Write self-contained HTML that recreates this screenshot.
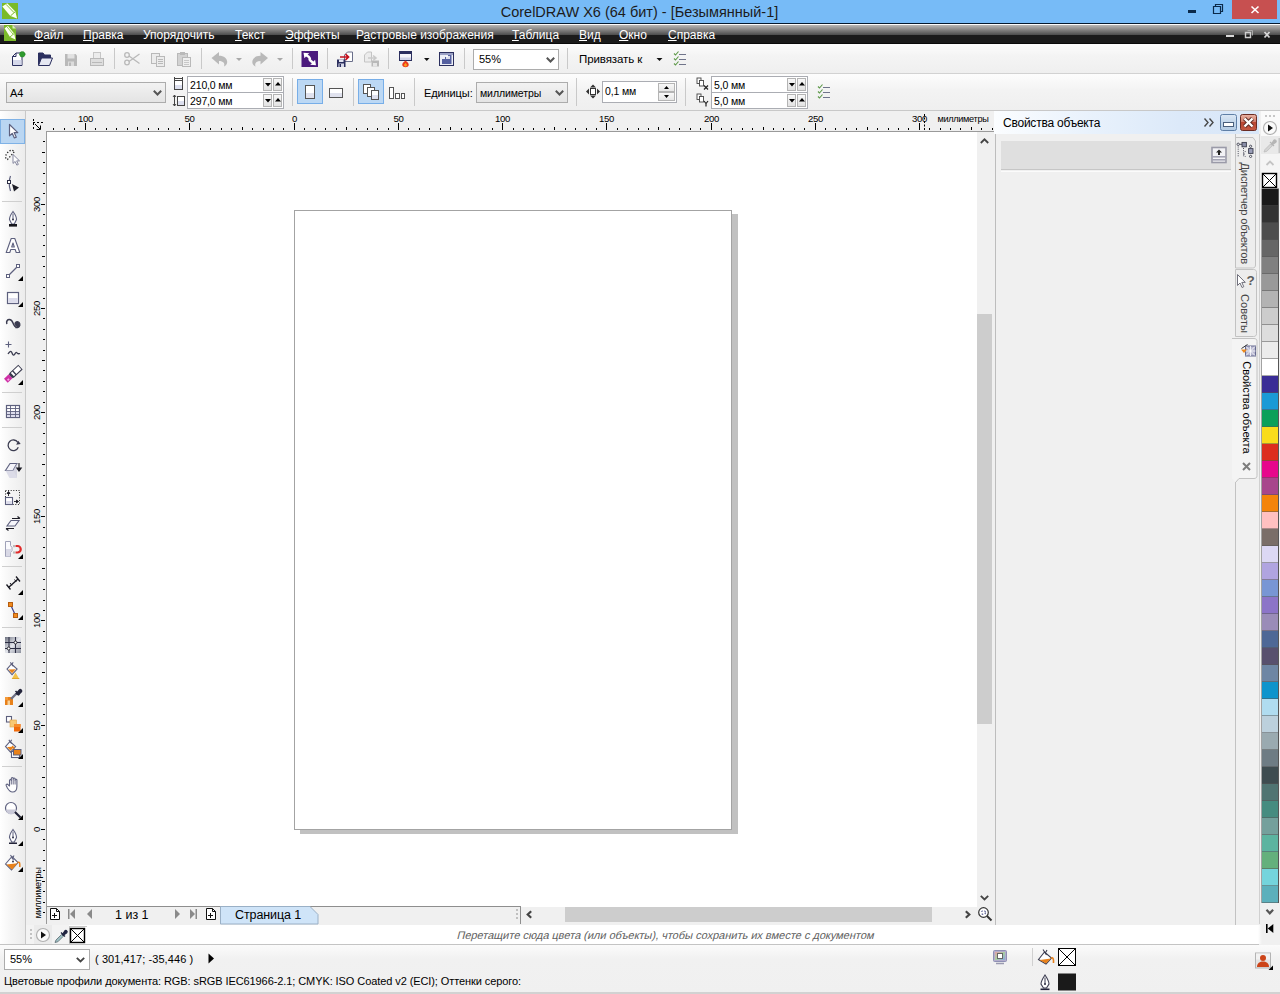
<!DOCTYPE html><html lang="ru"><head><meta charset="utf-8"><title>CorelDRAW X6 (64 бит) - [Безымянный-1]</title><style>
*{box-sizing:border-box;margin:0;padding:0}
html,body{width:1280px;height:994px;overflow:hidden;background:#f0f0f0}
body{position:relative;font-family:"Liberation Sans",sans-serif;font-size:11px;color:#000}
.a{position:absolute}
.t{position:absolute;white-space:nowrap;line-height:1}
svg{position:absolute;overflow:visible}
#title{left:0;top:0;width:1280px;height:23px;background:#77bbf7}
#titleline{left:0;top:22.600px;width:1280px;height:1.400px;background:#03182c}
#menubar{left:0;top:24px;width:1280px;height:20px;background:linear-gradient(#fcfcfc 0px,#fcfcfc 1px,#b6b4b2 1.2px,#4c4c4c 11px,#1b1b1b 11.2px,#1b1b1b 19px,#0a0a0a 19.2px)}
.mi{position:absolute;top:27.500px;color:#fff;font-size:12px;white-space:nowrap;line-height:14px}
.mi u{text-decoration:underline;text-underline-offset:1px}
#tb1{left:0;top:44px;width:1280px;height:29px;background:linear-gradient(#fdfdfd,#f4f4f4 40%,#efefef)}
#tb1line{left:0;top:73px;width:1280px;height:1px;background:#d2d2d2}
#tb2{left:0;top:74px;width:1280px;height:36px;background:linear-gradient(#fdfdfd,#f3f3f3 45%,#efefef)}
#tb2line{left:0;top:110px;width:1280px;height:1px;background:#c8c8c8}
.sep{position:absolute;width:1px;background:#c9c9c9}
.combo{position:absolute;border:1px solid #acacac;background:linear-gradient(#f2f2f2,#e4e4e4)}
.inp{position:absolute;border:1px solid #abadb3;background:#fff}
</style></head><body>
<div class="a" id="title"></div><div class="a" id="titleline"></div>
<svg style="left:2px;top:3px" width="16" height="16" viewBox="0 0 16 16"><rect width="16" height="16" fill="#7abb28"/><path d="M0.300 3.500 L5.200 0.200 L13.300 8.600 L15.100 15.500 L8.400 13 Z" fill="#fdfff2"/><path d="M4 1.300 L12.100 9.700" stroke="#7abb28" stroke-width="0.900"/><path d="M8.400 13 L13.300 8.600" stroke="#7abb28" stroke-width="1"/></svg>
<div class="t" style="left:500px;top:4.500px;font-size:14.500px;width:279px;text-align:center;color:#1c1c1c">CorelDRAW X6 (64 бит) - [Безымянный-1]</div>
<div class="a" style="left:1232px;top:0;width:45px;height:19px;background:#c75050"></div>
<svg style="left:0;top:0" width="1280" height="24"><rect x="1188" y="10" width="8" height="3" fill="#0b2a4a"/><path d="M1213.5 6.5h7v7h-7z M1215.500 6.500v-2h7v7h-2" fill="none" stroke="#0b2a4a" stroke-width="1.2"/><path d="M1251.500 6.500l7 6.500M1258.500 6.500l-7 6.500" stroke="#fff" stroke-width="1.6" fill="none"/></svg>
<div class="a" id="menubar"></div>
<svg style="left:4px;top:25px" width="12" height="16" viewBox="0 0 12 16"><path d="M0 0h8.500l3.500 3.500v12.500h-12z" fill="#7cba2a"/><path d="M8.500 0v3.500h3.500z" fill="#d9efb5"/><path d="M0.600 3.200 L4 1 L10.200 8.400 L11.400 14.400 L6 12 Z" fill="#fdfff2"/><path d="M3 1.900 L9.200 9.300" stroke="#7abb28" stroke-width="0.800"/><path d="M6 12 L10.200 8.400" stroke="#7abb28" stroke-width="0.900"/></svg>
<div class="mi" style="left:34px"><u>Ф</u>айл</div>
<div class="mi" style="left:83px"><u>П</u>равка</div>
<div class="mi" style="left:143px">Упоря<u>д</u>очить</div>
<div class="mi" style="left:235px"><u>Т</u>екст</div>
<div class="mi" style="left:285px"><u>Э</u>ффекты</div>
<div class="mi" style="left:356px">Р<u>а</u>стровые изображения</div>
<div class="mi" style="left:512px"><u>Т</u>аблица</div>
<div class="mi" style="left:579px"><u>В</u>ид</div>
<div class="mi" style="left:619px"><u>О</u>кно</div>
<div class="mi" style="left:668px"><u>С</u>правка</div>
<svg style="left:0;top:24px" width="1280" height="20"><rect x="1226" y="11" width="8" height="2" fill="#d8d8d8"/><path d="M1245.500 8.500h5v5h-5z" fill="none" stroke="#d0d0d0" stroke-width="1.4"/><path d="M1247.500 6.500h5v5" fill="none" stroke="#aaa" stroke-width="1"/><path d="M1264.500 8l5 5.500M1269.500 8l-5 5.500" stroke="#d8d8d8" stroke-width="1.8" fill="none"/></svg>
<div class="a" id="tb1"></div><div class="a" id="tb1line"></div><div class="a" id="tb2"></div><div class="a" id="tb2line"></div>
<svg style="left:0;top:44px" width="1280" height="67"><path d="M12.500 21.500v-9l3.500-3.500h6v12.500z" fill="#fff" stroke="#2b2f5e" stroke-width="1"/><path d="M13 16h8.500v5h-8.500z" fill="#d5d8ea"/><path d="M12.500 12.500h3.500v-3.500" fill="none" stroke="#2b2f5e" stroke-width="1"/><circle cx="22.300" cy="10.300" r="2.800" fill="#2e9a2e" stroke="#1f7a1f" stroke-width=".8" stroke-dasharray="1 1"/><path d="M38.500 21v-12h4.500l1.500 2h6v3" fill="#2b2f5e" stroke="#2b2f5e" stroke-width="1"/><path d="M38.500 21.500l3-7.500h11l-3 7.500z" fill="#e6e8f2" stroke="#2b2f5e" stroke-width="1"/><path d="M65 10h10.500l1.500 1.500v10.500h-12z" fill="#b9b9b9"/><rect x="67.500" y="10" width="7" height="4.500" fill="#e2e2e2"/><rect x="68" y="17.500" width="6" height="4.500" fill="#dcdcdc"/><rect x="69" y="18.500" width="2" height="3.500" fill="#b9b9b9"/><rect x="93.500" y="8.500" width="7" height="7" fill="#ececec" stroke="#c6c6c6"/><rect x="90.500" y="14.500" width="13" height="7" fill="#dedede" stroke="#b9b9b9"/><rect x="92" y="18" width="10" height="1" fill="#b9b9b9"/><g fill="none" stroke="#b9b9b9" stroke-width="1.300"><circle cx="127" cy="11" r="2.300"/><circle cx="127" cy="18.500" r="2.300"/><path d="M129 12l10.500 7.500M129 17.500l10.500-7.500"/></g><g fill="#ececec" stroke="#b9b9b9"><rect x="151.500" y="9.500" width="8" height="10"/><rect x="156.500" y="12.500" width="8" height="10"/></g><path d="M158 15.500h5M158 17.500h5M158 19.500h5" stroke="#b9b9b9"/><rect x="177.500" y="9.500" width="10" height="12" fill="#d2d2d2" stroke="#b9b9b9"/><rect x="180" y="8" width="5" height="3" fill="#b9b9b9"/><rect x="182.500" y="13.500" width="8" height="9" fill="#efefef" stroke="#b9b9b9"/><path d="M184 16.500h5M184 18.500h5M184 20.500h5" stroke="#c8c8c8"/><path d="M211.500 14l7.500-6v3.800c5 0 8.200 2.700 8.200 6.200c0 2.400-1.400 3.800-3.200 4.400c1.200-3-.8-5.400-5-5.400v3.500z" fill="#b9b9b9"/><path d="M236 14h6l-3 3z" fill="#a9a9a9"/><path d="M268 14l-7.500-6v3.800c-5 0-8.200 2.700-8.200 6.200c0 2.400 1.400 3.800 3.200 4.400c-1.200-3 .8-5.400 5-5.400v3.500z" fill="#b9b9b9"/><path d="M277 14h6l-3 3z" fill="#a9a9a9"/><rect x="301.500" y="7" width="16.500" height="16" fill="#4b1a7d"/><g fill="#fff"><path d="M303.500 8.800l5.800.4-1.700 1.600c2.200 1 3.700 2.600 3.600 4.600l-1.700.5c-.4-1.200-1.800-2.400-3.500-3.300l-1.600 1.600z"/><path transform="rotate(180 309.750 15)" d="M303.500 8.800l5.800.4-1.700 1.600c2.200 1 3.700 2.600 3.600 4.600l-1.700.5c-.4-1.200-1.800-2.400-3.500-3.300l-1.600 1.600z"/></g><path d="M344.500 17.500v-6.500l3-3h5v9.500z" fill="#fff" stroke="#6a6f8a"/><rect x="337" y="15.500" width="8.500" height="7.500" fill="#2b2f5e"/><rect x="339" y="15.500" width="4.500" height="2.500" fill="#e4e6f2"/><rect x="338.500" y="19.500" width="5.500" height="3.500" fill="#d6d8e8"/><rect x="339.500" y="20" width="1.500" height="3" fill="#2b2f5e"/><path d="M340 13h7.500M345.500 10.200l3 2.800-3 2.800" fill="none" stroke="#c4101e" stroke-width="1.700"/><path d="M364.500 18v-7l3-3h4v10z" fill="#ececec" stroke="#c4c4c4"/><rect x="371.500" y="16.500" width="7.500" height="6" fill="#b9b9b9"/><rect x="373" y="19" width="4" height="3.500" fill="#e6e6e6"/><path d="M368 14h7M373 11.500l3 2.500-3 2.500" fill="none" stroke="#c9c9c9" stroke-width="1.600"/><rect x="399.500" y="7.500" width="12" height="9" fill="#f4f4f8" stroke="#2b2f5e"/><rect x="399" y="7" width="13" height="3" fill="#2b2f5e"/><rect x="400" y="13.500" width="11" height="2.500" fill="#cfd2e6"/><path d="M405.500 16.500c2 1.800 3.600 2.800 3.200 4.800c-.3 1.300-1.600 1.900-3.200 1.900s-2.900-.6-3.200-1.900c-.4-2 1.200-3 3.200-4.800z" fill="#ea3a1c"/><path d="M405.500 19c1 1 1.600 1.500 1.400 2.600c-.2.700-.8 1-1.400 1s-1.200-.3-1.400-1c-.2-1.100.4-1.600 1.400-2.600z" fill="#f9a01c"/><path d="M424 14h5.500l-2.750 3z" fill="#111"/><rect x="439.500" y="8.500" width="14" height="13" fill="#eceef6" stroke="#2b2f5e"/><rect x="440" y="9" width="13" height="2" fill="#9aa0c4"/><path d="M442 20v-5h3v-2h3v-2h3.500v9z" fill="#5560a0"/><rect x="446" y="12" width="4" height="3" fill="#fff" opacity=".8"/><path d="M674 9.5l1.500 1.500 3-3.500" fill="none" stroke="#5f9a4a" stroke-width="1.150"/><path d="M679 10.5h7" stroke="#70748a" stroke-width="1"/><path d="M674 14.5l1.500 1.500 3-3.500" fill="none" stroke="#5f9a4a" stroke-width="1.150"/><path d="M679 15.5h7" stroke="#70748a" stroke-width="1"/><path d="M674 19.5l1.500 1.500 3-3.500" fill="none" stroke="#5f9a4a" stroke-width="1.150"/><path d="M679 20.5h7" stroke="#70748a" stroke-width="1"/><path d="M656.500 14h6l-3 3z" fill="#111"/><g fill="none" stroke="#444"><rect x="174.500" y="36.500" width="8" height="9" fill="#fff"/><path d="M174 34.500h9M174.500 33v3M182.500 33v3"/><rect x="175" y="41" width="7" height="4" fill="#dcdfee" stroke="none"/><rect x="177.500" y="52.500" width="7" height="9" fill="#fff"/><rect x="178" y="57" width="6" height="4" fill="#dcdfee" stroke="none"/><path d="M174.500 51v11M173 53l1.500-2 1.500 2M173 60l1.500 2 1.500-2"/></g><rect x="297.500" y="35.500" width="25" height="24" fill="#bcd8f4" stroke="#77aee8"/><rect x="305.500" y="41.500" width="9" height="13" fill="#fff" stroke="#555"/><rect x="306" y="49" width="8" height="5" fill="#e0e2ee"/><rect x="329.500" y="44.500" width="13" height="9" fill="#fff" stroke="#555"/><rect x="330" y="49" width="12" height="4" fill="#e0e2ee"/><rect x="358.500" y="35.500" width="25" height="24" fill="#bcd8f4" stroke="#77aee8"/><g fill="#fff" stroke="#555"><rect x="363.500" y="40.500" width="7" height="9"/><rect x="367.500" y="43.500" width="7" height="9"/><rect x="371.500" y="46.500" width="7" height="9"/></g><rect x="372" y="51" width="6" height="4" fill="#dfe1ee"/><g fill="#fff" stroke="#555"><rect x="389.500" y="43.500" width="4" height="11"/><rect x="395.500" y="49.500" width="4" height="5"/><rect x="401.500" y="49.500" width="3" height="5"/></g><g fill="#333"><rect x="590.500" y="44.500" width="5" height="6" fill="#fff" stroke="#333"/><path d="M593 40.500l3 3h-6zM593 54.500l3-3h-6zM586 47.500l3-3v6zM600 47.500l-3-3v6z"/></g><g fill="#fff" stroke="#444" stroke-width=".9"><rect x="697" y="34" width="4" height="5.500"/><rect x="699.500" y="36.5" width="4" height="5.500"/></g><g fill="#fff" stroke="#444" stroke-width=".9"><rect x="697" y="50" width="4" height="5.500"/><rect x="699.500" y="52.5" width="4" height="5.500"/></g><path d="M704 41.500l4 4M708 41.500l-4 4" stroke="#222" stroke-width="1.200"/><path d="M704 57l2 2.500 2-2.500M706 59.500v3" stroke="#222" stroke-width="1.200" fill="none"/><path d="M818 42.5l1.500 1.500 3-3.500" fill="none" stroke="#5f9a4a" stroke-width="1.150"/><path d="M823 43.5h7" stroke="#70748a" stroke-width="1"/><path d="M818 47.5l1.500 1.500 3-3.500" fill="none" stroke="#5f9a4a" stroke-width="1.150"/><path d="M823 48.5h7" stroke="#70748a" stroke-width="1"/><path d="M818 52.5l1.500 1.500 3-3.500" fill="none" stroke="#5f9a4a" stroke-width="1.150"/><path d="M823 53.5h7" stroke="#70748a" stroke-width="1"/></svg>
<div class="sep" style="left:114px;top:48px;height:21px"></div>
<div class="sep" style="left:201px;top:48px;height:21px"></div>
<div class="sep" style="left:292px;top:48px;height:21px"></div>
<div class="sep" style="left:327px;top:48px;height:21px"></div>
<div class="sep" style="left:388px;top:48px;height:21px"></div>
<div class="sep" style="left:464px;top:48px;height:21px"></div>
<div class="sep" style="left:567px;top:48px;height:21px"></div>
<div class="sep" style="left:292px;top:78px;height:28px"></div>
<div class="sep" style="left:353px;top:78px;height:28px"></div>
<div class="sep" style="left:414px;top:78px;height:28px"></div>
<div class="sep" style="left:576px;top:78px;height:28px"></div>
<div class="sep" style="left:685px;top:78px;height:28px"></div>
<div class="inp" style="left:473px;top:49px;width:86px;height:21px;border-color:#acacac"></div>
<div class="t" style="left:479px;top:54px;font-size:11px">55%</div><svg style="left:546px;top:57px" width="9" height="6"><path d="M0.800 0.800l3.700 3.700 3.700-3.700" fill="none" stroke="#555" stroke-width="2"/></svg>
<div class="t" style="left:579px;top:54px;font-size:11.500px;letter-spacing:-0.100px">Привязать к</div>
<div class="combo" style="left:6px;top:82px;width:160px;height:21px"></div><div class="t" style="left:10px;top:88px;font-size:11px">A4</div><svg style="left:153px;top:90px" width="9" height="6"><path d="M0.800 0.800l3.700 3.700 3.700-3.700" fill="none" stroke="#555" stroke-width="2"/></svg>
<div class="inp" style="left:187px;top:76px;width:97px;height:17px"></div><div class="inp" style="left:187px;top:92px;width:97px;height:17px"></div>
<div class="t" style="left:190px;top:80px;font-size:10.500px;letter-spacing:-0.150px">210,0 мм</div><div class="t" style="left:190px;top:96px;font-size:10.500px;letter-spacing:-0.150px">297,0 мм</div>
<div class="a" style="left:263px;top:78px;width:9px;height:13px;border:1px solid #b4b4b4;background:linear-gradient(#f8f8f8,#e2e2e2)"></div><svg style="left:264.5px;top:83px" width="6" height="4"><path d="M0 0h6l-3 3.500z" fill="#000"/></svg><div class="a" style="left:273px;top:78px;width:9px;height:13px;border:1px solid #b4b4b4;background:linear-gradient(#f8f8f8,#e2e2e2)"></div><svg style="left:274.5px;top:82px" width="6" height="4"><path d="M0 3.500h6l-3-3.500z" fill="#000"/></svg><div class="a" style="left:263px;top:94px;width:9px;height:13px;border:1px solid #b4b4b4;background:linear-gradient(#f8f8f8,#e2e2e2)"></div><svg style="left:264.5px;top:99px" width="6" height="4"><path d="M0 0h6l-3 3.500z" fill="#000"/></svg><div class="a" style="left:273px;top:94px;width:9px;height:13px;border:1px solid #b4b4b4;background:linear-gradient(#f8f8f8,#e2e2e2)"></div><svg style="left:274.5px;top:98px" width="6" height="4"><path d="M0 3.500h6l-3-3.500z" fill="#000"/></svg>
<div class="t" style="left:424px;top:87.500px;font-size:11px;letter-spacing:-0.100px">Единицы:</div>
<div class="combo" style="left:476px;top:82px;width:92px;height:21px"></div><div class="t" style="left:480px;top:87.500px;font-size:10.500px;letter-spacing:-0.100px">миллиметры</div><svg style="left:555px;top:90px" width="9" height="6"><path d="M0.800 0.800l3.700 3.700 3.700-3.700" fill="none" stroke="#555" stroke-width="2"/></svg>
<div class="inp" style="left:602px;top:81px;width:75px;height:22px"></div><div class="t" style="left:605px;top:86px;font-size:10.500px;letter-spacing:-0.150px">0,1 мм</div>
<div class="a" style="left:658px;top:83px;width:17px;height:9px;border:1px solid #b4b4b4;background:linear-gradient(#f8f8f8,#e6e6e6)"></div><div class="a" style="left:658px;top:92px;width:17px;height:9px;border:1px solid #b4b4b4;background:linear-gradient(#f8f8f8,#e6e6e6)"></div>
<svg style="left:664px;top:86px" width="6" height="12"><path d="M0 3h5l-2.500-3zM0 9h5l-2.500 3z" fill="#000"/></svg>
<div class="inp" style="left:711px;top:76px;width:97px;height:17px"></div><div class="inp" style="left:711px;top:92px;width:97px;height:17px"></div>
<div class="t" style="left:714px;top:80px;font-size:10.500px;letter-spacing:-0.150px">5,0 мм</div><div class="t" style="left:714px;top:96px;font-size:10.500px;letter-spacing:-0.150px">5,0 мм</div>
<div class="a" style="left:787px;top:78px;width:9px;height:13px;border:1px solid #b4b4b4;background:linear-gradient(#f8f8f8,#e2e2e2)"></div><svg style="left:788.5px;top:83px" width="6" height="4"><path d="M0 0h6l-3 3.500z" fill="#000"/></svg><div class="a" style="left:797px;top:78px;width:9px;height:13px;border:1px solid #b4b4b4;background:linear-gradient(#f8f8f8,#e2e2e2)"></div><svg style="left:798.5px;top:82px" width="6" height="4"><path d="M0 3.500h6l-3-3.500z" fill="#000"/></svg><div class="a" style="left:787px;top:94px;width:9px;height:13px;border:1px solid #b4b4b4;background:linear-gradient(#f8f8f8,#e2e2e2)"></div><svg style="left:788.5px;top:99px" width="6" height="4"><path d="M0 0h6l-3 3.500z" fill="#000"/></svg><div class="a" style="left:797px;top:94px;width:9px;height:13px;border:1px solid #b4b4b4;background:linear-gradient(#f8f8f8,#e2e2e2)"></div><svg style="left:798.5px;top:98px" width="6" height="4"><path d="M0 3.500h6l-3-3.500z" fill="#000"/></svg>
<div class="a" style="left:0;top:111px;width:25px;height:834px;background:linear-gradient(90deg,#ffffff,#f6f6f6 40%,#ececec)"></div>
<div class="a" style="left:0;top:119px;width:25px;height:25px;background:#bad6f2;border:1px solid #7fb2e6"></div>
<svg style="left:0;top:0" width="27" height="900"><path transform="translate(9.5,124.5) scale(1.08)" d="M0 0v10.500l2.500-2.300 2 4.300 1.800-.8-2-4.200h3.400z" fill="#fff" stroke="#5d607e" stroke-width="1.100" stroke-linejoin="round"/><path d="M6 158.500c-1.500-3 2-8 6-8.500l2.500 1.500l-7 8z" fill="none" stroke="#222" stroke-width="1.300" stroke-dasharray="1.300 1.700"/><path transform="translate(13,154.5) scale(0.85)" d="M0 0v10.500l2.500-2.300 2 4.300 1.800-.8-2-4.200h3.400z" fill="#fff" stroke="#7d8098" stroke-width="1.100" stroke-linejoin="round"/><path d="M10.500 176c-2 5-1.500 10 0 15" fill="none" stroke="#5d607e" stroke-width="1.200"/><rect x="7.500" y="180.500" width="3" height="3" fill="#fff" stroke="#2c2e44"/><path d="M12 184l7 3.500-5 4z" fill="#1b1b24"/><rect x="2" y="201" width="20" height="1" fill="#cfcfcf"/><path d="M13 211.5c-1.500 2-3.500 5.500-3.500 8l2.200 4.500h2.600l2.200-4.500c0-2.500-2-6-3.500-8z" fill="#fff" stroke="#5d607e" stroke-width="1.100"/><path d="M13 213.5v6.500" stroke="#5d607e"/><circle cx="13" cy="219.5" r=".9" fill="#2c2e44"/><rect x="9" y="224" width="8" height="2.600" fill="#15151c"/><path d="M11.200 238.500h3.600l5 14h-3.600l-1-3h-4.400l-1 3h-3.600z M13 243l-1.300 4h2.600z" fill="#fff" stroke="#5d607e" stroke-width="1.100" fill-rule="evenodd" stroke-linejoin="round"/><path d="M9.500 274.500l7-7" stroke="#5d607e" stroke-width="1.200"/><rect x="6.500" y="274.500" width="3" height="3" fill="#fff" stroke="#5d607e"/><rect x="16.500" y="264.500" width="3" height="3" fill="#fff" stroke="#5d607e"/><path d="M23 276v5h-5z" fill="#000"/><rect x="7.500" y="292.500" width="11" height="11" fill="#fff" stroke="#5d607e" stroke-width="1.200"/><rect x="8.200" y="298" width="9.600" height="4.800" fill="#dcdceb"/><path d="M23 302v5h-5z" fill="#000"/><path d="M6.800 323.400c-.7-2.100 .6-3.800 2.500-3.800c2 0 3 1.500 3.700 3.400c.9 2.500 1.900 4.400 4.300 4.400" fill="none" stroke="#3b3c50" stroke-width="1.500" stroke-linecap="round"/><path d="M15.500 327.600c3.200.700 5-1.600 4.300-3.900c-.6-1.900-2.700-2.600-4.100-1.500c-1 .8-1 2.300 0 3c.6.400 1.500.300 1.800-.300" fill="#3b3c50" stroke="#3b3c50" stroke-width="1.200" stroke-linejoin="round"/><path d="M8.500 341.500v6M5.500 344.500h6" stroke="#5d607e" stroke-width="1.100"/><path d="M8 354c1.500-2.500 3-3.500 3.800-1.500s1.200 3 2.200 2.500s1.500-3 2.500-2.500s1 2 3.500 1" fill="none" stroke="#3b3c50" stroke-width="1.300"/><g transform="translate(12.800,374.200) rotate(-43)"><rect x="-9.500" y="-2.700" width="6.500" height="5.400" fill="#cf2fa6"/><rect x="-8" y="0" width="2" height="1.800" fill="#f3a8e2"/><rect x="-1.500" y="-2.700" width="11.500" height="5.400" fill="#fff" stroke="#3b3c50" stroke-width="1"/><rect x="-3" y="-2.700" width="2.400" height="5.400" fill="#3b3c50"/><rect x="1.500" y="-2.700" width="1.300" height="5.400" fill="#3b3c50"/></g><path d="M23 380v5h-5z" fill="#000"/><rect x="2" y="392" width="20" height="1" fill="#cfcfcf"/><rect x="6.500" y="405.500" width="13" height="12" fill="#fff" stroke="#5d607e" stroke-width="1.200"/><rect x="7" y="411" width="12" height="6" fill="#dcdcec"/><path d="M6.500 408.500h13M6.500 411.500h13M6.500 414.500h13M10.500 405.500v12M15.500 405.500v12" stroke="#5d607e" stroke-width=".9"/><rect x="2" y="427" width="20" height="1" fill="#cfcfcf"/><path d="M17.800 442.300a5.300 5.300 0 1 0 .5 5" fill="none" stroke="#3b3c50" stroke-width="1.300"/><path d="M16.200 444.800l4.500-.8-2.500-3.200z" fill="#3b3c50"/><path d="M10 463.500h7l-4 7h-7.500z" fill="#f4f4fa" stroke="#5d607e" stroke-width="1.100"/><path d="M5.500 470.500h7.500l4 7.500h-7.500z" fill="#dcdce8"/><path d="M13 470.500l4-7v14.500z" fill="#c9c9da" opacity=".7"/><path d="M19 463v7.500M16.800 468l2.200 3 2.200-3z" stroke="#1b1b24" stroke-width="1.100" fill="#1b1b24"/><rect x="5.500" y="490.500" width="14" height="14" fill="none" stroke="#222" stroke-dasharray="1 1.600"/><rect x="5.500" y="497.500" width="7" height="7" fill="#fff" stroke="#5d607e" stroke-width="1.100"/><rect x="6.200" y="501" width="5.600" height="3" fill="#dcdceb"/><path d="M8.500 496v-4M7 493.500l1.500-2 1.500 2zM14 501.500h4M16.500 500l2 1.500-2 1.500z" stroke="#1b1b24" stroke-width=".9" fill="#1b1b24"/><path d="M11 520.500h8l-4 5.500h-8z" fill="#f6f6fb" stroke="#5d607e" stroke-width="1.100"/><path d="M12 518.500h7.500M17.500 516.500l2.500 2" stroke="#1b1b24" stroke-width="1.200" fill="none"/><path d="M6.500 528.500h7.500M8.500 530.500l-2.500-2" stroke="#1b1b24" stroke-width="1.200" fill="none"/><path d="M5.500 541.500h5v4l1.500 2v3l-1.500 2v4h-5z" fill="#fafafd" stroke="#a0a2b8" stroke-width="1"/><path d="M6 549h5.500v1.500l-1.200 2v4h-4.300z" fill="#d9d9e6"/><path d="M15.500 546h2a3 3 0 0 1 0 6.500h-2" fill="none" stroke="#e02a2a" stroke-width="2.200"/><rect x="13" y="545" width="2.200" height="2.200" fill="#bbb"/><rect x="13" y="551.400" width="2.200" height="2.200" fill="#bbb"/><path d="M23 554v5h-5z" fill="#000"/><rect x="2" y="566" width="20" height="1" fill="#cfcfcf"/><path d="M8.500 587.500l9.500-8.500" stroke="#1b1b24" stroke-width="1.400"/><path d="M6.500 584.500l4 5M16 576.500l4 5" stroke="#1b1b24" stroke-width="1.300"/><path d="M10 583l1.800 2.300M14.500 579.500l1.800 2.300" stroke="#1b1b24" stroke-width="1"/><path d="M23 590v5h-5z" fill="#000"/><path d="M10.500 604.500l5 11" stroke="#3a3f8a" stroke-width="1.200"/><rect x="8.500" y="602.500" width="4" height="4" fill="#f08a1e" stroke="#b55d10"/><rect x="13.500" y="613.500" width="4" height="4" fill="#f08a1e" stroke="#b55d10"/><path d="M23 615v5h-5z" fill="#000"/><rect x="2" y="627" width="20" height="1" fill="#cfcfcf"/><defs><linearGradient id="mg" x1="0" y1="0" x2="1" y2="1"><stop offset="0" stop-color="#6e7280"/><stop offset=".5" stop-color="#e4e6ec"/><stop offset="1" stop-color="#8d919e"/></linearGradient></defs><rect x="5" y="637" width="16" height="16" fill="url(#mg)"/><path d="M9 637v16M15.500 637v16M5 642.500h16M5 648.500h16" stroke="#2c2e44" stroke-width="1.100"/><circle cx="15.500" cy="642.500" r="1.500" fill="#fff" stroke="#1b1b24" stroke-width=".9"/><circle cx="8.700" cy="648.500" r="1.500" fill="#fff" stroke="#1b1b24" stroke-width=".9"/><g transform="translate(7,664) scale(1.12)"><path d="M0 4.500l4-4.500 5 4.500-4.500 5z" fill="#fff" stroke="#5d607e" stroke-width="1"/><path d="M1.300 5l6.500-.3-3.300 3.600z" fill="#e8811a"/><path d="M3 -1.500l2.500 3.500M5.500 -1.500l-1.500 2.500" stroke="#5d607e" stroke-width="1"/></g><path d="M15.500 672.500l3.800 6.500h-7.600z" fill="#f2c14a"/><path d="M12.500 678h6.500l.5 1h-7.600z" fill="#e0a52a"/><rect x="5" y="697" width="8" height="8" fill="#e8811a"/><rect x="7.500" y="700.500" width="2.500" height="4.500" fill="#f8d29a"/><rect x="5" y="697" width="3" height="3" fill="#f39a3a"/><path d="M11 699l5.500-5.500" stroke="#6e7084" stroke-width="2.400"/><path d="M15.500 691l4 4M16.500 693.500l3-3.500c1-1 2.800.6 1.800 1.800l-3 3z" fill="#23243a" stroke="#23243a" stroke-width="1.600"/><path d="M23 702v5h-5z" fill="#000"/><rect x="6.500" y="716.500" width="5" height="5.500" fill="#fff" stroke="#5d607e" stroke-width="1.100"/><rect x="10" y="720" width="6.500" height="7" fill="#f7c873" stroke="#e0a040" stroke-width=".6"/><rect x="14" y="724" width="6.500" height="7.500" fill="#f06a0a"/><rect x="14" y="724" width="6.500" height="3" fill="#f58a2a"/><path d="M23 728v5h-5z" fill="#000"/><g transform="translate(5.5,741.5) scale(1.12)"><path d="M0 4.500l4-4.500 5 4.500-4.500 5z" fill="#fff" stroke="#5d607e" stroke-width="1"/><path d="M1.300 5l6.500-.3-3.300 3.600z" fill="#e8811a"/><path d="M3 -1.500l2.500 3.500M5.500 -1.500l-1.500 2.500" stroke="#5d607e" stroke-width="1"/></g><path d="M12 746l2 2v3" fill="none" stroke="#e8811a" stroke-width="1.200"/><rect x="11.500" y="751.500" width="8" height="6" fill="#fff" stroke="#5d607e" stroke-width="1.100"/><rect x="13.500" y="749.500" width="7.500" height="5.500" fill="#e8811a" stroke="#5d607e" stroke-width="1"/><path d="M23 754v5h-5z" fill="#000"/><rect x="2" y="766" width="20" height="1" fill="#cfcfcf"/><path d="M9.500 786v-5.500c0-1.300 1.800-1.300 1.800 0v-2c0-1.300 1.900-1.300 1.900 0v.4c0-1.300 1.900-1.300 1.900 0v1.200c0-1.200 1.800-1.200 1.800 0v6.400c0 3.500-1.500 5.500-4.500 5.500c-2.500 0-3.500-1.500-5-4l-1.200-2.500c-.5-1.200 1-2 1.800-.8z" fill="#fff" stroke="#5d607e" stroke-width="1.100" stroke-linejoin="round"/><path d="M11.300 780.500v4M13.200 779v5.500M15.100 780v4.500" stroke="#5d607e" stroke-width=".9"/><circle cx="11" cy="808" r="5.500" fill="#fff" stroke="#5d607e" stroke-width="1.200"/><path d="M6 809.500h10a5 5 0 0 1 -10 0z" fill="#c9c9d8"/><path d="M15 812l5.500 5.500" stroke="#23243a" stroke-width="2.200"/><path d="M23 815v5h-5z" fill="#000"/><path d="M13 829.5c-1.500 2-3.500 5.500-3.500 8l2.200 4.500h2.600l2.200-4.500c0-2.500-2-6-3.500-8z" fill="#fff" stroke="#5d607e" stroke-width="1.100"/><path d="M13 831.5v6.500" stroke="#5d607e"/><circle cx="13" cy="837.5" r=".9" fill="#2c2e44"/><rect x="9" y="842.500" width="8" height="1.500" fill="#23243a"/><path d="M23 841v5h-5z" fill="#000"/><path d="M5.500 864l6.500-7.500 6 6-6.500 7.500z" fill="#fff" stroke="#5d607e" stroke-width="1.100"/><path d="M6.500 864.500l11-1.300-5.500 6.300z" fill="#e8811a"/><path d="M10.500 855l3 5M14 855.500l-2 3.500" stroke="#5d607e" stroke-width="1.100"/><circle cx="13" cy="861.500" r=".9" fill="#23243a"/><path d="M17.500 862.500c2-1 2.500 0 2.300 4.500" fill="none" stroke="#e8811a" stroke-width="1.500"/><path d="M23 867v5h-5z" fill="#000"/></svg>
<div class="a" style="left:26px;top:111px;width:970px;height:813px;background:#f0f0f0"></div>
<div class="a" style="left:25px;top:111px;width:1px;height:834px;background:#c8c8c8"></div>
<div class="a" style="left:46px;top:131px;width:931px;height:776px;background:#fff;border-left:1px solid #9a9a9a"></div>
<div class="a" style="left:46px;top:131px;width:948px;height:1px;background:#9a9a9a"></div>
<div class="a" style="left:300px;top:214px;width:438px;height:620px;background:#c1c1c1"></div>
<div class="a" style="left:294px;top:210px;width:438px;height:620px;background:#fff;border:1px solid #a3a3a3"></div>
<svg style="left:0;top:0" width="1000" height="930" font-family="Liberation Sans, sans-serif" font-size="9.600" letter-spacing="-0.350" fill="#000"><rect x="53" y="128" width="1" height="2"/><rect x="64" y="128" width="1" height="2"/><rect x="74" y="128" width="1" height="2"/><rect x="85" y="123" width="1" height="7"/><text x="85.5" y="121.700" text-anchor="middle">100</text><rect x="95" y="128" width="1" height="2"/><rect x="106" y="128" width="1" height="2"/><rect x="116" y="128" width="1" height="2"/><rect x="127" y="128" width="1" height="2"/><rect x="137" y="127" width="1" height="3"/><rect x="148" y="128" width="1" height="2"/><rect x="158" y="128" width="1" height="2"/><rect x="168" y="128" width="1" height="2"/><rect x="179" y="128" width="1" height="2"/><rect x="189" y="123" width="1" height="7"/><text x="189.5" y="121.700" text-anchor="middle">50</text><rect x="200" y="128" width="1" height="2"/><rect x="210" y="128" width="1" height="2"/><rect x="221" y="128" width="1" height="2"/><rect x="231" y="128" width="1" height="2"/><rect x="242" y="127" width="1" height="3"/><rect x="252" y="128" width="1" height="2"/><rect x="263" y="128" width="1" height="2"/><rect x="273" y="128" width="1" height="2"/><rect x="283" y="128" width="1" height="2"/><rect x="294" y="123" width="1" height="7"/><text x="294.5" y="121.700" text-anchor="middle">0</text><rect x="304" y="128" width="1" height="2"/><rect x="315" y="128" width="1" height="2"/><rect x="325" y="128" width="1" height="2"/><rect x="336" y="128" width="1" height="2"/><rect x="346" y="127" width="1" height="3"/><rect x="356" y="128" width="1" height="2"/><rect x="367" y="128" width="1" height="2"/><rect x="377" y="128" width="1" height="2"/><rect x="388" y="128" width="1" height="2"/><rect x="398" y="123" width="1" height="7"/><text x="398.5" y="121.700" text-anchor="middle">50</text><rect x="408" y="128" width="1" height="2"/><rect x="419" y="128" width="1" height="2"/><rect x="429" y="128" width="1" height="2"/><rect x="440" y="128" width="1" height="2"/><rect x="450" y="127" width="1" height="3"/><rect x="461" y="128" width="1" height="2"/><rect x="471" y="128" width="1" height="2"/><rect x="481" y="128" width="1" height="2"/><rect x="492" y="128" width="1" height="2"/><rect x="502" y="123" width="1" height="7"/><text x="502.5" y="121.700" text-anchor="middle">100</text><rect x="513" y="128" width="1" height="2"/><rect x="523" y="128" width="1" height="2"/><rect x="533" y="128" width="1" height="2"/><rect x="544" y="128" width="1" height="2"/><rect x="554" y="127" width="1" height="3"/><rect x="565" y="128" width="1" height="2"/><rect x="575" y="128" width="1" height="2"/><rect x="586" y="128" width="1" height="2"/><rect x="596" y="128" width="1" height="2"/><rect x="606" y="123" width="1" height="7"/><text x="606.5" y="121.700" text-anchor="middle">150</text><rect x="617" y="128" width="1" height="2"/><rect x="627" y="128" width="1" height="2"/><rect x="638" y="128" width="1" height="2"/><rect x="648" y="128" width="1" height="2"/><rect x="658" y="127" width="1" height="3"/><rect x="669" y="128" width="1" height="2"/><rect x="679" y="128" width="1" height="2"/><rect x="690" y="128" width="1" height="2"/><rect x="700" y="128" width="1" height="2"/><rect x="711" y="123" width="1" height="7"/><text x="711.5" y="121.700" text-anchor="middle">200</text><rect x="721" y="128" width="1" height="2"/><rect x="731" y="128" width="1" height="2"/><rect x="742" y="128" width="1" height="2"/><rect x="752" y="128" width="1" height="2"/><rect x="763" y="127" width="1" height="3"/><rect x="773" y="128" width="1" height="2"/><rect x="783" y="128" width="1" height="2"/><rect x="794" y="128" width="1" height="2"/><rect x="804" y="128" width="1" height="2"/><rect x="815" y="123" width="1" height="7"/><text x="815.5" y="121.700" text-anchor="middle">250</text><rect x="825" y="128" width="1" height="2"/><rect x="835" y="128" width="1" height="2"/><rect x="846" y="128" width="1" height="2"/><rect x="856" y="128" width="1" height="2"/><rect x="867" y="127" width="1" height="3"/><rect x="877" y="128" width="1" height="2"/><rect x="888" y="128" width="1" height="2"/><rect x="898" y="128" width="1" height="2"/><rect x="908" y="128" width="1" height="2"/><rect x="919" y="123" width="1" height="7"/><text x="919.5" y="121.700" text-anchor="middle">300</text><rect x="929" y="128" width="1" height="2"/><rect x="940" y="128" width="1" height="2"/><rect x="950" y="128" width="1" height="2"/><rect x="960" y="128" width="1" height="2"/><rect x="971" y="127" width="1" height="3"/><rect x="981" y="128" width="1" height="2"/><rect x="992" y="128" width="1" height="2"/><text x="963" y="121.700" text-anchor="middle" font-size="9.200">миллиметры</text><path d="M924.500 114v16" stroke="#000" stroke-dasharray="2 1.500"/><rect x="43" y="912" width="2" height="1"/><rect x="43" y="902" width="2" height="1"/><rect x="43" y="891" width="2" height="1"/><rect x="42" y="881" width="3" height="1"/><rect x="43" y="870" width="2" height="1"/><rect x="43" y="860" width="2" height="1"/><rect x="43" y="850" width="2" height="1"/><rect x="43" y="839" width="2" height="1"/><rect x="41" y="829" width="4" height="1"/><text transform="translate(40,829.5) rotate(-90)" text-anchor="middle">0</text><rect x="43" y="818" width="2" height="1"/><rect x="43" y="808" width="2" height="1"/><rect x="43" y="797" width="2" height="1"/><rect x="43" y="787" width="2" height="1"/><rect x="42" y="777" width="3" height="1"/><rect x="43" y="766" width="2" height="1"/><rect x="43" y="756" width="2" height="1"/><rect x="43" y="745" width="2" height="1"/><rect x="43" y="735" width="2" height="1"/><rect x="41" y="725" width="4" height="1"/><text transform="translate(40,725.5) rotate(-90)" text-anchor="middle">50</text><rect x="43" y="714" width="2" height="1"/><rect x="43" y="704" width="2" height="1"/><rect x="43" y="693" width="2" height="1"/><rect x="43" y="683" width="2" height="1"/><rect x="42" y="672" width="3" height="1"/><rect x="43" y="662" width="2" height="1"/><rect x="43" y="652" width="2" height="1"/><rect x="43" y="641" width="2" height="1"/><rect x="43" y="631" width="2" height="1"/><rect x="41" y="620" width="4" height="1"/><text transform="translate(40,620.5) rotate(-90)" text-anchor="middle">100</text><rect x="43" y="610" width="2" height="1"/><rect x="43" y="600" width="2" height="1"/><rect x="43" y="589" width="2" height="1"/><rect x="43" y="579" width="2" height="1"/><rect x="42" y="568" width="3" height="1"/><rect x="43" y="558" width="2" height="1"/><rect x="43" y="547" width="2" height="1"/><rect x="43" y="537" width="2" height="1"/><rect x="43" y="527" width="2" height="1"/><rect x="41" y="516" width="4" height="1"/><text transform="translate(40,516.5) rotate(-90)" text-anchor="middle">150</text><rect x="43" y="506" width="2" height="1"/><rect x="43" y="495" width="2" height="1"/><rect x="43" y="485" width="2" height="1"/><rect x="43" y="475" width="2" height="1"/><rect x="42" y="464" width="3" height="1"/><rect x="43" y="454" width="2" height="1"/><rect x="43" y="443" width="2" height="1"/><rect x="43" y="433" width="2" height="1"/><rect x="43" y="423" width="2" height="1"/><rect x="41" y="412" width="4" height="1"/><text transform="translate(40,412.5) rotate(-90)" text-anchor="middle">200</text><rect x="43" y="402" width="2" height="1"/><rect x="43" y="391" width="2" height="1"/><rect x="43" y="381" width="2" height="1"/><rect x="43" y="370" width="2" height="1"/><rect x="42" y="360" width="3" height="1"/><rect x="43" y="350" width="2" height="1"/><rect x="43" y="339" width="2" height="1"/><rect x="43" y="329" width="2" height="1"/><rect x="43" y="318" width="2" height="1"/><rect x="41" y="308" width="4" height="1"/><text transform="translate(40,308.5) rotate(-90)" text-anchor="middle">250</text><rect x="43" y="298" width="2" height="1"/><rect x="43" y="287" width="2" height="1"/><rect x="43" y="277" width="2" height="1"/><rect x="43" y="266" width="2" height="1"/><rect x="42" y="256" width="3" height="1"/><rect x="43" y="245" width="2" height="1"/><rect x="43" y="235" width="2" height="1"/><rect x="43" y="225" width="2" height="1"/><rect x="43" y="214" width="2" height="1"/><rect x="41" y="204" width="4" height="1"/><text transform="translate(40,204.5) rotate(-90)" text-anchor="middle">300</text><rect x="43" y="193" width="2" height="1"/><rect x="43" y="183" width="2" height="1"/><rect x="43" y="173" width="2" height="1"/><rect x="43" y="162" width="2" height="1"/><rect x="42" y="152" width="3" height="1"/><rect x="43" y="141" width="2" height="1"/><text transform="translate(41,893) rotate(-90)" text-anchor="middle" font-size="9.200">миллиметры</text><g stroke="#000" fill="none"><path d="M33.500 119v10" stroke-dasharray="2 2"/><path d="M33 122.500h10" stroke-dasharray="2 2"/><path d="M35 124l5 5M40.500 125.500v4h-4"/></g></svg>
<div class="a" style="left:977px;top:132px;width:18px;height:775px;background:#f0f0f0"></div>
<div class="a" style="left:977px;top:314px;width:15px;height:410px;background:#cdcdcd"></div>
<svg style="left:980px;top:138px" width="9" height="6"><path d="M0.800 5l3.700-3.700 3.700 3.700" fill="none" stroke="#444" stroke-width="1.800"/></svg><svg style="left:980px;top:895px" width="9" height="6"><path d="M0.800 0.800l3.700 3.700 3.700-3.700" fill="none" stroke="#444" stroke-width="1.800"/></svg>
<div class="a" style="left:995px;top:134px;width:1px;height:791px;background:#bdbdbd"></div>
<div class="a" style="left:47px;top:907px;width:948px;height:18px;background:#f0f0f0"></div>
<div class="a" style="left:47px;top:906px;width:474px;height:1px;background:#8e8e8e"></div><div class="a" style="left:520px;top:906px;width:1px;height:18px;background:#8e8e8e"></div>
<svg style="left:0;top:900px" width="1000" height="30"><path d="M50.500 8.500h6l3 3v8h-9z" fill="#fff" stroke="#111"/><path d="M56.500 8.500v3h3" fill="none" stroke="#111"/><path d="M52 15.500h5M54.500 13v5" stroke="#111"/><rect x="68" y="9" width="1.500" height="10" fill="#8a8a8a"/><path d="M75 9v10l-5-5z" fill="#8a8a8a"/><path d="M92 9v10l-5-5z" fill="#8a8a8a"/><path d="M175 9v10l5-5z" fill="#8a8a8a"/><path d="M190 9v10l5-5z" fill="#8a8a8a"/><rect x="195.500" y="9" width="1.500" height="10" fill="#8a8a8a"/><path d="M206.500 8.500h6l3 3v8h-9z" fill="#fff" stroke="#111"/><path d="M212.500 8.500v3h3" fill="none" stroke="#111"/><path d="M208 15.500h5M210.500 13v5" stroke="#111"/><path d="M220.500 24v-17.500h89.500l8 8v9.500z" fill="#cfe4f8" stroke="#9ab0c6" stroke-width="1"/><g fill="#c0c0c0"><rect x="516" y="9" width="2" height="2"/><rect x="516" y="13" width="2" height="2"/><rect x="516" y="17" width="2" height="2"/></g></svg>
<div class="t" style="left:115px;top:909px;font-size:12.500px">1 из 1</div>
<div class="t" style="left:235px;top:908.500px;font-size:12.500px;letter-spacing:-0.100px">Страница 1</div>
<div class="a" style="left:565px;top:907px;width:367px;height:15px;background:#cdcdcd"></div>
<svg style="left:526px;top:910px" width="6" height="9"><path d="M5.200 1.200l-3.500 3.300 3.500 3.300" fill="none" stroke="#444" stroke-width="2.200"/></svg><svg style="left:965px;top:910px" width="6" height="9"><path d="M0.800 1.200l3.500 3.300-3.500 3.300" fill="none" stroke="#444" stroke-width="2.200"/></svg>
<svg style="left:977px;top:906px" width="16" height="16"><circle cx="6.500" cy="6.500" r="4.800" fill="#fff" stroke="#333" stroke-width="1.200"/><circle cx="6.500" cy="6.500" r="2" fill="none" stroke="#555a90" stroke-width="1.200" stroke-dasharray="1.500 1.600"/><path d="M10 10l4.500 4.500" stroke="#333" stroke-width="2"/></svg>
<div class="a" style="left:26px;top:925px;width:1236px;height:19px;background:linear-gradient(90deg,#fff 1232px,#f0f0f0 1236px)"></div>
<div class="a" style="left:26px;top:925px;width:43px;height:19px;background:#f3f3f3"></div>
<div class="a" style="left:69px;top:926px;width:1px;height:18px;background:#c9c9c9"></div><div class="a" style="left:69px;top:926px;width:18px;height:1px;background:#c9c9c9"></div>
<div class="a" style="left:46px;top:907px;width:1px;height:17px;background:#9a9a9a"></div>
<div class="a" style="left:0;top:944px;width:1259px;height:1px;background:#c4c4c4"></div>
<svg style="left:26px;top:924px" width="70" height="22"><g fill="#c2c2c2"><rect x="4" y="5" width="2" height="2"/><rect x="4" y="9" width="2" height="2"/><rect x="4" y="13" width="2" height="2"/></g><rect x="8" y="1" width="18" height="19" fill="#ebebeb"/><circle cx="17" cy="11" r="6.500" fill="#fafafa" stroke="#b0b0b0" stroke-width="1.200"/><path d="M15 7.500v7l5-3.500z" fill="#111"/><g><path d="M29 18.500l1-2.500 5.500-5.500 1.800 1.800-5.500 5.500z" fill="#9ec0c4" stroke="#5a6a70" stroke-width=".8"/><path d="M35 8.500l4 4M36.500 10.500l2.500-3.800c1-1 3 .8 1.800 2l-3.600 2.600z" fill="#1f2340" stroke="#1f2340" stroke-width="1.200"/></g><rect x="44.500" y="4.500" width="14" height="14" fill="#fff" stroke="#000" stroke-width="1.400"/><path d="M45 5l13 13M58 5l-13 13" stroke="#000" stroke-width="1"/></svg>
<div class="t" style="left:456px;top:929.700px;font-size:11px;color:#606060;letter-spacing:-0.015px;transform:skewX(-14deg);transform-origin:0 100%">Перетащите сюда цвета (или объекты), чтобы сохранить их вместе с документом</div>
<div class="a" style="left:0;top:945px;width:1280px;height:49px;background:linear-gradient(#fbfbfb,#f1f1f1 14px,#f0f0f0)"></div>
<div class="inp" style="left:4px;top:949px;width:86px;height:21px;border-color:#acacac"></div><div class="t" style="left:10px;top:954px;font-size:11px">55%</div><svg style="left:76px;top:957px" width="9" height="6"><path d="M0.800 0.800l3.700 3.700 3.700-3.700" fill="none" stroke="#444" stroke-width="1.800"/></svg>
<div class="t" style="left:95px;top:954px;font-size:11px;letter-spacing:0.080px">( 301,417; -35,446 )</div>
<svg style="left:208px;top:953px" width="8" height="12"><path d="M0.500 0.500v10l5.500-5z" fill="#000"/></svg>
<div class="t" style="left:4px;top:976px;font-size:11px;letter-spacing:-0.085px">Цветовые профили документа: RGB: sRGB IEC61966-2.1; CMYK: ISO Coated v2 (ECI); Оттенки серого:</div>
<div class="a" style="left:0;top:992px;width:1280px;height:2px;background:#d2d2d2"></div>
<svg style="left:990px;top:946px" width="290" height="48"><defs><linearGradient id="mon" x1="0" y1="0" x2="1" y2="1"><stop offset="0" stop-color="#e6a0a8"/><stop offset=".5" stop-color="#a8d0a0"/><stop offset="1" stop-color="#8aa8e0"/></linearGradient></defs><rect x="3.500" y="4.500" width="13" height="11" rx="1" fill="#b4aecc" stroke="#8f90b4"/><rect x="5" y="6" width="10" height="8" fill="url(#mon)"/><rect x="7.500" y="7.500" width="5" height="5" fill="#fff" stroke="#666"/><path d="M6 17.500h8" stroke="#9a9ab0" stroke-width="1.500"/><rect x="42" y="2" width="1" height="18" fill="#d0d0d0"/><path d="M48.500 13.500l6-7.500 7 6-5.500 6z" fill="#fff" stroke="#3b3c50" stroke-width="1.100"/><path d="M49.500 14l11.500-1.500-5 5z" fill="#e8811a"/><path d="M53 3.500l3.500 5.500M57 4l-2 3.500" stroke="#3b3c50" stroke-width="1.100"/><path d="M61 12c2-.8 2.800.5 2.500 5" fill="none" stroke="#e8811a" stroke-width="1.600"/><rect x="68.500" y="2.500" width="17" height="17" fill="#fff" stroke="#000" stroke-width="1"/><path d="M69 3l16 16M85 3l-16 16" stroke="#000"/><path d="M55 29c-2 3-4 6.500-4 9l2.500 4h3l2.500-4c0-2.500-2-6-4-9z" fill="#fff" stroke="#3b3c50" stroke-width="1.100"/><path d="M55 31.500v6" stroke="#3b3c50"/><circle cx="55" cy="38" r="1" fill="#23243a"/><rect x="50.500" y="42.500" width="9" height="1.600" fill="#23243a"/><rect x="68" y="27.500" width="18" height="17" fill="#1a1a1a"/><g transform="translate(-1,.5)"><rect x="266.500" y="6.500" width="15" height="15" fill="#e4e4e4" stroke="#b4b4b4"/><rect x="267" y="7" width="14" height="6" fill="#f2f2f2"/><circle cx="274" cy="11.500" r="3" fill="#cc4418"/><path d="M268 20.500c0-4 3-5.500 6-5.500s6 1.500 6 5.500z" fill="#cc4418"/><path d="M284 23.500v-4.500l-4.500 4.500z" fill="#000"/></g></svg>
<div class="a" style="left:994px;top:111px;width:265px;height:23px;background:linear-gradient(90deg,#fbfdff,#e9f2fc 35%,#dce9f9 70%,#d9e7f8)"></div>
<div class="t" style="left:1003px;top:117px;font-size:12px;letter-spacing:-0.230px">Свойства объекта</div>
<svg style="left:1200px;top:111px" width="60" height="24"><path d="M4.500 7.500l3.500 4-3.500 4M9.500 7.500l3.500 4-3.500 4" fill="none" stroke="#484848" stroke-width="1.400"/><rect x="20.500" y="3.500" width="16" height="16" rx="2" fill="url(#mg2)" stroke="#5f7fa6"/><rect x="23.500" y="11.500" width="10" height="4" fill="#fff" stroke="#4a5f7c"/><defs><linearGradient id="cg" x1="0" y1="0" x2="0" y2="1"><stop offset="0" stop-color="#e9b3a5"/><stop offset=".48" stop-color="#d07a68"/><stop offset=".5" stop-color="#bb4632"/><stop offset="1" stop-color="#c45a44"/></linearGradient><linearGradient id="mg2" x1="0" y1="0" x2="0" y2="1"><stop offset="0" stop-color="#dce8f5"/><stop offset=".5" stop-color="#c3d6ea"/><stop offset="1" stop-color="#b4cbe3"/></linearGradient></defs><rect x="40.500" y="3.500" width="16" height="16" rx="2" fill="url(#cg)" stroke="#6a2c24"/><path d="M44.500 7.500l8 8M52.500 7.500l-8 8" stroke="#5a2a24" stroke-width="4.200"/><path d="M44.500 7.500l8 8M52.500 7.500l-8 8" stroke="#fff" stroke-width="2.400"/></svg>
<div class="a" style="left:1001px;top:141px;width:230px;height:29px;background:#dfdfdf;border-bottom:1px solid #c6c6c6"></div><div class="a" style="left:1001px;top:170.500px;width:230px;height:1px;background:#fbfbfb"></div>
<svg style="left:1210px;top:146px" width="18" height="18"><rect x="2" y="1.500" width="14" height="15" fill="#f2f2f6" stroke="#9a9aa8" stroke-width="1.600"/><rect x="2" y="10" width="14" height="1.600" fill="#a4a4b4"/><rect x="2" y="13" width="14" height="1.600" fill="#a4a4b4"/><path d="M9 3.500l3 3h-2v2.500h-2v-2.500h-2z" fill="#222"/></svg>
<svg style="left:1230px;top:130px" width="32" height="800" font-family="Liberation Sans, sans-serif" font-size="11.200"><path d="M5.500 4v3.500h17.500l2.500 3.500v124c0 2-1 3-3 3h-17z" fill="#ededed" stroke="#c2c2c2"/><path d="M5.500 139.500h18c2 0 3 1 3 3v61c0 2-1 3-3 3h-18z" fill="#ededed" stroke="#c2c2c2"/><path d="M2 208.500h22c2 0 3 1 3 3v134c0 2-1 3-3 3h-15l-3.500 4l-3.500 -4z" fill="#f4f4f4" stroke="none"/><path d="M2 208.500h22c2 0 3 1 3 3v134c0 2-1 3-3 3h-15l-3.500 4" fill="none" stroke="#c2c2c2"/><path d="M5.500 352v443" stroke="#c2c2c2"/><text transform="translate(10.500,32.500) rotate(90)" fill="#444" letter-spacing="-0.220">Диспетчер объектов</text><text transform="translate(10.500,164) rotate(90)" fill="#444" letter-spacing="0">Советы</text><text transform="translate(13.200,231.200) rotate(90)" fill="#000" letter-spacing="-0.100">Свойства объекта</text><g fill="none" stroke="#3a3c4c" stroke-width=".9"><circle cx="8.200" cy="14.300" r="1.200" fill="#fff"/><path d="M9.500 14.300h2.500"/><rect x="12" y="12.400" width="4.400" height="4.400" fill="#8a8ea8"/><path d="M8.200 16.500v10.500M13.500 18v9M15.500 21l-1.800 3M13.700 24l1.800 3" stroke-dasharray="1 1.200"/><circle cx="20.600" cy="16.300" r="1.100" fill="#fff"/><rect x="18.600" y="18.600" width="4.400" height="4.800" fill="#9a9eb8"/><circle cx="20.600" cy="26.400" r="1.100" fill="#fff"/></g><path d="M7.500 144.500v11l2.500-2.500 2 4.500 1.800-.8-2-4.300h3.500z" fill="#fff" stroke="#70707c" stroke-width="1"/><text x="16.500" y="154.500" font-size="13.500" font-weight="bold" fill="#5c5c5c">?</text><g transform="translate(1,1.500)"><rect x="14.500" y="214.500" width="10" height="10" fill="#b8b8d0" stroke="#666a90"/><path d="M15 215l9 9M24 215l-9 9M19.500 214.500v10M14.500 219.500h10" stroke="#fff" stroke-width=".8"/><path d="M10.500 217l6-4" stroke="#333"/><path d="M10 218l3 3.500 3-3.500z" fill="#ee8a1c"/></g><path d="M13 333l7 7M20 333l-7 7" stroke="#7c7c7c" stroke-width="2"/></svg>
<div class="a" style="left:1259px;top:111px;width:21px;height:814px;background:#f0f0f0"></div>
<div class="a" style="left:1259px;top:134px;width:1px;height:790px;background:#d0d0d0"></div>
<svg style="left:1259px;top:111px" width="21" height="834"><rect x="2" y="0" width="19" height="25" fill="#fafafa"/><rect x="2" y="25" width="19" height="18" fill="#e9e9e9"/><rect x="2" y="43" width="19" height="18" fill="#f5f5f5"/><rect x="19.500" y="27" width="1.500" height="15" fill="#c4c4c4"/><rect x="2.500" y="77.500" width="17.500" height="714.500" fill="#555" /><rect x="3" y="78" width="16" height="16.500" fill="#1a1a1a"/><rect x="3" y="95" width="16" height="16.500" fill="#333333"/><rect x="3" y="112" width="16" height="16.500" fill="#4d4d4d"/><rect x="3" y="129" width="16" height="16.500" fill="#666666"/><rect x="3" y="146" width="16" height="16.500" fill="#808080"/><rect x="3" y="163" width="16" height="16.500" fill="#999999"/><rect x="3" y="180" width="16" height="16.500" fill="#b3b3b3"/><rect x="3" y="197" width="16" height="16.500" fill="#cccccc"/><rect x="3" y="214" width="16" height="16.500" fill="#dddddd"/><rect x="3" y="231" width="16" height="16.500" fill="#ececec"/><rect x="3" y="248" width="16" height="16.500" fill="#ffffff"/><rect x="3" y="265" width="16" height="16.500" fill="#3a2d96"/><rect x="3" y="282" width="16" height="16.500" fill="#1a9ad6"/><rect x="3" y="299" width="16" height="16.500" fill="#0aa05a"/><rect x="3" y="316" width="16" height="16.500" fill="#f9dc1c"/><rect x="3" y="333" width="16" height="16.500" fill="#dc2e1e"/><rect x="3" y="350" width="16" height="16.500" fill="#e6078c"/><rect x="3" y="367" width="16" height="16.500" fill="#a8468c"/><rect x="3" y="384" width="16" height="16.500" fill="#f4840a"/><rect x="3" y="401" width="16" height="16.500" fill="#ffc0c0"/><rect x="3" y="418" width="16" height="16.500" fill="#7a6e68"/><rect x="3" y="435" width="16" height="16.500" fill="#dcd8f4"/><rect x="3" y="452" width="16" height="16.500" fill="#b0a4e0"/><rect x="3" y="469" width="16" height="16.500" fill="#7896d4"/><rect x="3" y="486" width="16" height="16.500" fill="#8c74c8"/><rect x="3" y="503" width="16" height="16.500" fill="#9a8cb8"/><rect x="3" y="520" width="16" height="16.500" fill="#4e6896"/><rect x="3" y="537" width="16" height="16.500" fill="#58506e"/><rect x="3" y="554" width="16" height="16.500" fill="#6e86a4"/><rect x="3" y="571" width="16" height="16.500" fill="#0e94cc"/><rect x="3" y="588" width="16" height="16.500" fill="#b0dcf0"/><rect x="3" y="605" width="16" height="16.500" fill="#bcd0dc"/><rect x="3" y="622" width="16" height="16.500" fill="#9aaab0"/><rect x="3" y="639" width="16" height="16.500" fill="#6e7c84"/><rect x="3" y="656" width="16" height="16.500" fill="#3e4c50"/><rect x="3" y="673" width="16" height="16.500" fill="#507472"/><rect x="3" y="690" width="16" height="16.500" fill="#468c80"/><rect x="3" y="707" width="16" height="16.500" fill="#74a09c"/><rect x="3" y="724" width="16" height="16.500" fill="#5cb4a0"/><rect x="3" y="741" width="16" height="16.500" fill="#64b07c"/><rect x="3" y="758" width="16" height="16.500" fill="#74d4dc"/><rect x="3" y="775" width="16" height="16.500" fill="#5cb0bc"/><rect x="3.500" y="62.500" width="14" height="14" fill="#fff" stroke="#000" stroke-width="1.400"/><path d="M4 63l13 13M17 63l-13 13" stroke="#000"/><g fill="#c6c6c6"><rect x="6" y="4" width="2" height="2"/><rect x="10" y="4" width="2" height="2"/><rect x="14" y="4" width="2" height="2"/></g><circle cx="11" cy="17" r="6.500" fill="#fafafa" stroke="#b0b0b0" stroke-width="1.200"/><path d="M9 13.500v7l5-3.500z" fill="#111"/><g transform="translate(0,-4)" opacity=".45"><path d="M5 45l1-2.500 5.500-5.500 1.800 1.800-5.500 5.500z" fill="#bbb" stroke="#888" stroke-width=".8"/><path d="M11 35l4 4M12.500 37l2.500-3.800c1-1 3 .8 1.800 2l-3.600 2.600z" fill="#777" stroke="#777" stroke-width="1.200"/></g><path d="M7.500 54l3.500-3.500 3.500 3.500" fill="none" stroke="#c4c4c4" stroke-width="1.800"/><path d="M7.500 798.800l3.300 3.500 3.300-3.500" fill="none" stroke="#555" stroke-width="2.200"/><rect x="7" y="813" width="1.600" height="9" fill="#000"/><path d="M14.300 813v9l-5.500-4.500z" fill="#000"/></svg>
</body></html>
